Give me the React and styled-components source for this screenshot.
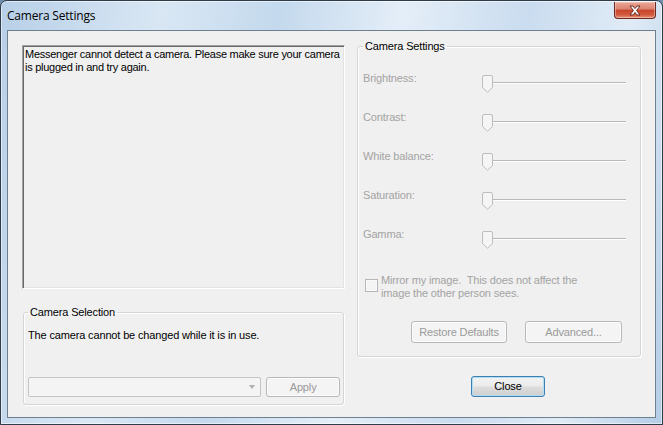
import styled, { createGlobalStyle } from 'styled-components'

const GlobalStyle = createGlobalStyle`
  html, body {
    margin: 0;
    padding: 0;
    background: #6f8fae;
  }
  #root {
    width: 663px;
    height: 425px;
  }
`

const sliders = ['Brightness:', 'Contrast:', 'White balance:', 'Saturation:', 'Gamma:']

function CloseGlyph() {
  return (
    <svg width="14" height="11" viewBox="0 0 14 11">
      <path
        d="M2 1 L5 1 L7 3.6 L9 1 L12 1 L8.6 5.5 L12 10 L9 10 L7 7.4 L5 10 L2 10 L5.4 5.5 Z"
        fill="#ffffff"
        stroke="#5c1d14"
        strokeWidth="0.9"
        strokeLinejoin="round"
      />
    </svg>
  )
}

function ThumbGlyph() {
  return (
    <svg width="11" height="18" viewBox="0 0 11 18">
      <path
        d="M2 0.5 H9 Q10.5 0.5 10.5 2 V12.5 L5.5 17.2 L0.5 12.5 V2 Q0.5 0.5 2 0.5 Z"
        fill="#f5f5f5"
        stroke="#bdbdbd"
      />
    </svg>
  )
}

function Slider() {
  return (
    <SliderBox>
      <ThumbGlyph />
      <Track />
    </SliderBox>
  )
}

function App() {
  return (
    <>
      <GlobalStyle />
      <Window>
        <TitleBar>
          <Title>Camera Settings</Title>
          <CloseBox>
            <CloseGlyph />
          </CloseBox>
        </TitleBar>
        <Client>
          <LeftColumn>
            <MessageBox>
              Messenger cannot detect a camera. Please make sure your camera is plugged in and try again.
            </MessageBox>
            <SelectionGroup>
              <Legend>Camera Selection</Legend>
              <Note>The camera cannot be changed while it is in use.</Note>
              <ComboRow>
                <Combo>
                  <Arrow />
                </Combo>
                <Button $width={74}>Apply</Button>
              </ComboRow>
            </SelectionGroup>
          </LeftColumn>
          <RightColumn>
            <SettingsGroup>
              <Legend>Camera Settings</Legend>
              {sliders.map((name) => (
                <SliderRow key={name}>
                  <SliderLabel>{name}</SliderLabel>
                  <Slider />
                </SliderRow>
              ))}
              <MirrorRow>
                <CheckBox />
                <MirrorText>
                  Mirror my image.&nbsp; This does not affect the
                  <br />
                  image the other person sees.
                </MirrorText>
              </MirrorRow>
              <ButtonRow>
                <Button $width={96} $height={22}>Restore Defaults</Button>
                <Button $width={97} $height={22}>Advanced...</Button>
              </ButtonRow>
            </SettingsGroup>
            <DefaultButton>Close</DefaultButton>
          </RightColumn>
        </Client>
      </Window>
    </>
  )
}

const Window = styled.div`
  box-sizing: border-box;
  width: 663px;
  height: 425px;
  display: flex;
  flex-direction: column;
  border: 1px solid #2f3d4a;
  border-radius: 7px 7px 0 0;
  background: linear-gradient(
    100deg,
    #b7cfe7 0%,
    #d9e7f4 22%,
    #c4d9ed 38%,
    #e4eef8 55%,
    #cadcef 72%,
    #e0ebf6 86%,
    #b4cde6 100%
  );
  box-shadow: inset 0 0 0 1px rgba(255, 255, 255, 0.55);
`

const TitleBar = styled.div`
  height: 29px;
  display: flex;
  justify-content: space-between;
  align-items: flex-start;
  padding-left: 6px;
`

const Title = styled.div`
  margin-top: 6px;
  font-family: "Open Sans", "Noto Sans", sans-serif;
  font-size: 12px;
  color: #000;
  letter-spacing: -0.2px;
`

const CloseBox = styled.div`
  box-sizing: border-box;
  width: 42px;
  height: 17px;
  margin: 1px 6px 0 0;
  display: flex;
  align-items: center;
  justify-content: center;
  border: 1px solid #6a2a22;
  border-top: none;
  border-radius: 0 0 4px 4px;
  background: linear-gradient(#eaa898 0%, #dc8270 45%, #c8442c 50%, #d25a3e 80%, #e8957a 100%);
  box-shadow: inset 0 0 0 1px rgba(255, 220, 210, 0.45);
`

const Client = styled.div`
  flex: 1;
  margin: 0 6px 6px 6px;
  display: flex;
  gap: 12px;
  padding: 9px 13px 0 14px;
  background: #f0f0f0;
  border: 1px solid #6e7f90;
  font-family: "Liberation Sans", Arial, sans-serif;
  font-size: 11px;
  line-height: 13px;
  letter-spacing: -0.15px;
`

const LeftColumn = styled.div`
  width: 323px;
  display: flex;
  flex-direction: column;
`

const RightColumn = styled.div`
  width: 284px;
  display: flex;
  flex-direction: column;
`

const MessageBox = styled.div`
  box-sizing: border-box;
  height: 244px;
  width: 323px;
  margin-top: 5px;
  padding: 2px 0 0 2px;
  color: #000;
  letter-spacing: -0.26px;
  border-top: 1px solid #a0a0a0;
  border-left: 1px solid #a0a0a0;
  border-right: 1px solid #ffffff;
  border-bottom: 1px solid #ffffff;
  box-shadow: inset 1px 1px 0 #696969, inset -1px -1px 0 #e3e3e3;
`

const GroupBox = styled.fieldset`
  margin: 0;
  min-width: 0;
  border: 1px solid #d5d5d5;
  border-radius: 3px;
  box-shadow: 1px 1px 0 #ffffff, inset 1px 1px 0 #ffffff;
`

const Legend = styled.legend`
  margin-left: 0;
  padding: 0 2px;
  color: #000;
  font-size: 11px;
  line-height: 13px;
`

const SelectionGroup = styled(GroupBox)`
  width: 321px;
  box-sizing: border-box;
  margin: 17px 0 0 1px;
  padding: 10px 3px 7px 4px;
`

const Note = styled.div`
  color: #000;
`

const ComboRow = styled.div`
  display: flex;
  gap: 5px;
  margin-top: 35px;
`

const Combo = styled.div`
  box-sizing: border-box;
  width: 234px;
  height: 20px;
  display: flex;
  align-items: center;
  justify-content: flex-end;
  padding-right: 5px;
  background: #f4f4f4;
  border: 1px solid #c4c4c4;
  border-radius: 2px;
`

const Arrow = styled.div`
  width: 0;
  height: 0;
  border-left: 3.5px solid transparent;
  border-right: 3.5px solid transparent;
  border-top: 4px solid #b0b0b0;
`

const Button = styled.div`
  box-sizing: border-box;
  width: ${(p) => p.$width}px;
  height: ${(p) => (p.$height ? p.$height : 20)}px;
  display: flex;
  align-items: center;
  justify-content: center;
  color: #9a9a9a;
  background: #f4f4f4;
  border: 1px solid #b5b9bd;
  border-radius: 3px;
  box-shadow: inset 0 0 0 1px #fbfbfb;
  font-size: 11px;
`

const SettingsGroup = styled(GroupBox)`
  box-sizing: border-box;
  width: 284px;
  margin: 0;
  padding: 19px 0 13px 5px;
`

const SliderRow = styled.div`
  height: 39px;
  display: flex;
  align-items: flex-start;
`

const SliderLabel = styled.div`
  width: 119px;
  color: #a3a3a3;
`

const SliderBox = styled.div`
  width: 144px;
  height: 18px;
  margin-top: 3px;
  display: flex;
  align-items: flex-start;
`

const Track = styled.div`
  flex: 1;
  height: 1px;
  margin-top: 7px;
  background: #b8b8b8;
  border-bottom: 1px solid #ffffff;
`

const MirrorRow = styled.div`
  display: flex;
  align-items: flex-start;
  gap: 3px;
  margin-top: 7px;
  padding-left: 2px;
`

const CheckBox = styled.div`
  box-sizing: border-box;
  width: 13px;
  height: 13px;
  margin-top: 5px;
  background: #f4f4f4;
  border: 1px solid #b6b6b6;
  box-shadow: inset 0 0 0 1px #fafafa;
`

const MirrorText = styled.div`
  color: #a3a3a3;
`

const ButtonRow = styled.div`
  display: flex;
  justify-content: flex-end;
  gap: 18px;
  margin-top: 21px;
  padding-right: 18px;
`

const DefaultButton = styled.div`
  box-sizing: border-box;
  width: 74px;
  height: 21px;
  margin: 19px 0 0 114px;
  display: flex;
  align-items: center;
  justify-content: center;
  color: #000;
  font-size: 11px;
  border: 1px solid #3c7fb1;
  border-radius: 3px;
  background: linear-gradient(#f2f2f2 0%, #ebebeb 48%, #dddddd 52%, #cfcfcf 100%);
  box-shadow: inset 0 0 0 1px #b3ddf5;
`

export default App
